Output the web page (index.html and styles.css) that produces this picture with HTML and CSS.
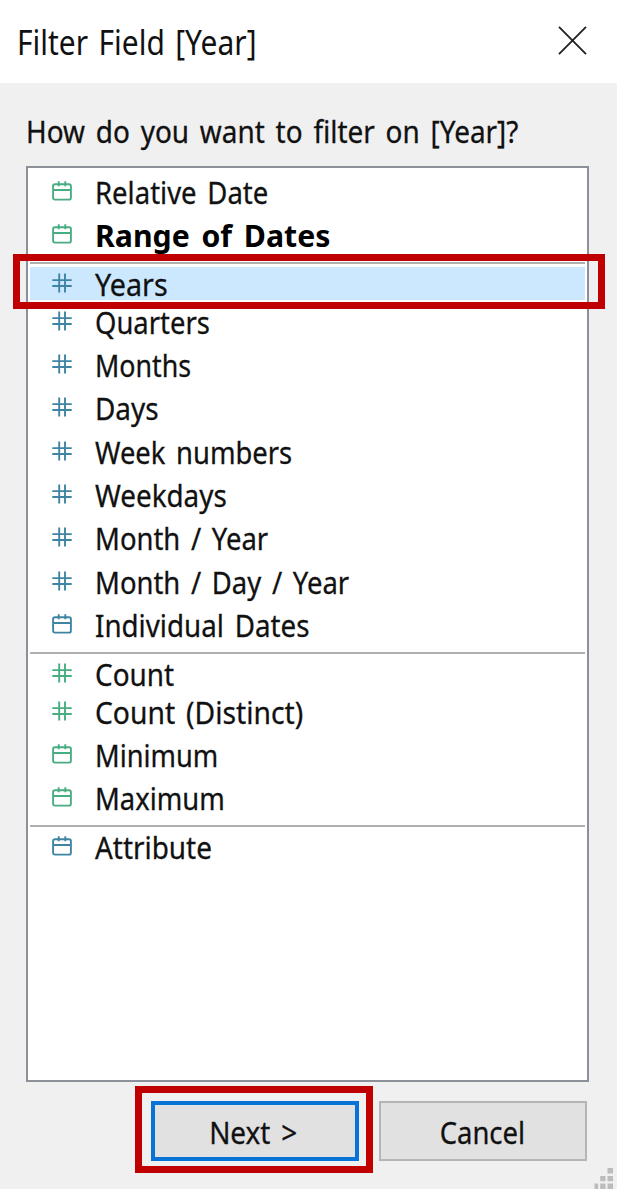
FILE: index.html
```
<!DOCTYPE html>
<html lang="en">
<head>
<meta charset="utf-8">
<title>Filter Field [Year]</title>
<link rel="stylesheet" href="styles.css">
</head>
<body>
<svg width="0" height="0" class="defs">
  <symbol id="cal" viewBox="0 0 20 20"><path d="M3 3.2h14q1.900 0 1.900 1.900v11.600q0 1.900-1.900 1.900h-14q-1.900 0-1.900-1.900v-11.600q0-1.900 1.900-1.900zM1 9h18M6.700.3v5M13.300.3v5"/></symbol>
  <symbol id="num" viewBox="0 0 20 20"><path d="M.3 7.100h19.400M.3 13h19.400M7.200.5v19M13 .5v19"/></symbol>
</svg>
<div class="dialog">
  <header class="titlebar">
    <h1 class="title">Filter Field [Year]</h1>
    <svg class="close" viewBox="0 0 30 30"><path d="M1 1l28 28M29 1L1 29"/></svg>
  </header>
  <main class="content">
    <p class="prompt">How do you want to filter on [Year]?</p>
    <div class="list">
      <div class="row green"><svg class="icon"><use href="#cal"/></svg><span class="relative">Relative Date</span></div>
      <div class="row green strong"><svg class="icon"><use href="#cal"/></svg><span class="range">Range of Dates</span></div>
      <div class="separator"></div>
      <div class="row short selected"><svg class="icon"><use href="#num"/></svg><span class="years">Years</span></div>
      <div class="row"><svg class="icon"><use href="#num"/></svg><span class="quarters">Quarters</span></div>
      <div class="row"><svg class="icon"><use href="#num"/></svg><span class="months">Months</span></div>
      <div class="row"><svg class="icon"><use href="#num"/></svg><span class="days">Days</span></div>
      <div class="row"><svg class="icon"><use href="#num"/></svg><span class="weeks">Week numbers</span></div>
      <div class="row"><svg class="icon"><use href="#num"/></svg><span class="weekdays">Weekdays</span></div>
      <div class="row"><svg class="icon"><use href="#num"/></svg><span class="month-year">Month / Year</span></div>
      <div class="row"><svg class="icon"><use href="#num"/></svg><span class="month-day-year">Month / Day / Year</span></div>
      <div class="row"><svg class="icon"><use href="#cal"/></svg><span class="individual">Individual Dates</span></div>
      <div class="separator"></div>
      <div class="row short green"><svg class="icon"><use href="#num"/></svg><span class="count">Count</span></div>
      <div class="row green"><svg class="icon"><use href="#num"/></svg><span class="distinct">Count (Distinct)</span></div>
      <div class="row green"><svg class="icon"><use href="#cal"/></svg><span class="minimum">Minimum</span></div>
      <div class="row green"><svg class="icon"><use href="#cal"/></svg><span class="maximum">Maximum</span></div>
      <div class="separator"></div>
      <div class="row short"><svg class="icon"><use href="#cal"/></svg><span class="attribute">Attribute</span></div>
    </div>
    <footer class="actions">
      <button class="button primary"><span class="next">Next &gt;</span></button>
      <button class="button"><span class="cancel">Cancel</span></button>
    </footer>
  </main>
  <div class="callout callout-years"></div>
  <div class="callout callout-next"></div>
  <svg class="grip" viewBox="0 0 20 21"><path d="M13.5 0h5.5v5.500h-5.500zM6.200 8h5.300v5.300h-5.300zM13.500 8h5.500v5.300h-5.500zM.5 15.500h3.700v5.500h-3.700zM6.200 15.500h5.300v5.500h-5.300zM13.500 15.500h5.500v5.500h-5.500z"/></svg>
</div>
</body>
</html>
```
FILE: styles.css
```
* { box-sizing: border-box; }
body { margin: 0; font-family: "Noto Sans", sans-serif; color: #111; }
.defs { position: absolute; }
.dialog { position: relative; width: 617px; height: 1189px; background: #f0f0f0; overflow: hidden; -webkit-text-stroke: .3px; }
.titlebar { display: flex; justify-content: space-between; align-items: center; height: 83px; padding: 0 30px 2px 17px; background: #fff; }
.title { margin: 3px 0 0; font-size: 34px; font-weight: 400; line-height: 44px; white-space: nowrap; word-spacing: 3px; transform: scaleX(.881); transform-origin: 0 50%; -webkit-text-stroke: 0; }
.close { width: 29px; height: 29px; fill: none; stroke: #222; stroke-width: 1.9; }
.content { padding: 26px 28px 0 26px; }
.prompt { margin: 0; height: 57px; font-size: 31px; line-height: 44px; white-space: nowrap; word-spacing: 4px; transform: scaleX(.9); transform-origin: 0 50%; }
.list { height: 915.500px; border: 2px solid #8b9099; background: #fff; padding: 2px 2px 0; font-size: 31px; }
.row { display: flex; align-items: center; height: 43.330px; padding-left: 22px; gap: 22.500px; color: #3f84a3; line-height: 42px; white-space: nowrap; }
.row span { color: #111; word-spacing: 4px; transform: scaleX(var(--fit)); transform-origin: 0 50%; }
.row.short { height: 32.500px; }
.row.green { color: #48ad80; }
.row.strong span { font-weight: 700; color: #000; -webkit-text-stroke: 0; }
.row.selected { background: #cce8ff; }
.relative { --fit: .887; }
.range { --fit: .975; }
.years { --fit: .925; }
.quarters { --fit: .884; }
.months { --fit: .864; }
.days { --fit: .9; }
.weeks { --fit: .883; }
.weekdays { --fit: .897; }
.month-year, .month-day-year { --fit: .885; }
.individual { --fit: .895; }
.count { --fit: .9; }
.distinct { --fit: .912; }
.minimum { --fit: .878; }
.maximum { --fit: .883; }
.attribute { --fit: .9; }
.icon { width: 20px; height: 20px; flex: none; fill: none; stroke: currentColor; stroke-width: 1.900; margin-top: -2px; }
.separator { height: 10.830px; padding-top: 5px; }
.separator::before { content: ""; display: block; height: 2px; background: #b0b0b0; }
.actions { display: flex; justify-content: flex-end; gap: 20px; padding: 19px 2px 0 0; }
.button { width: 208px; height: 60px; padding: 0; border: 2px solid #b5b5b5; background: #e1e1e1; font: 31px/42px "Noto Sans", sans-serif; color: #111; }
.button.primary { border: 4px solid #0873d6; }
.button span { display: inline-block; padding-top: 2px; }
.next { word-spacing: 4px; transform: scaleX(.9); padding-right: 5px; }
.cancel { transform: scaleX(.885); padding-right: 2px; }
.callout { position: absolute; border: 7px solid #c00000; }
.callout-years { left: 13px; top: 254px; width: 592px; height: 55px; }
.callout-next { left: 135px; top: 1086px; width: 238px; height: 87px; }
.grip { position: absolute; right: 3px; bottom: 0; width: 20px; height: 21px; fill: #bcbcbc; }
```
